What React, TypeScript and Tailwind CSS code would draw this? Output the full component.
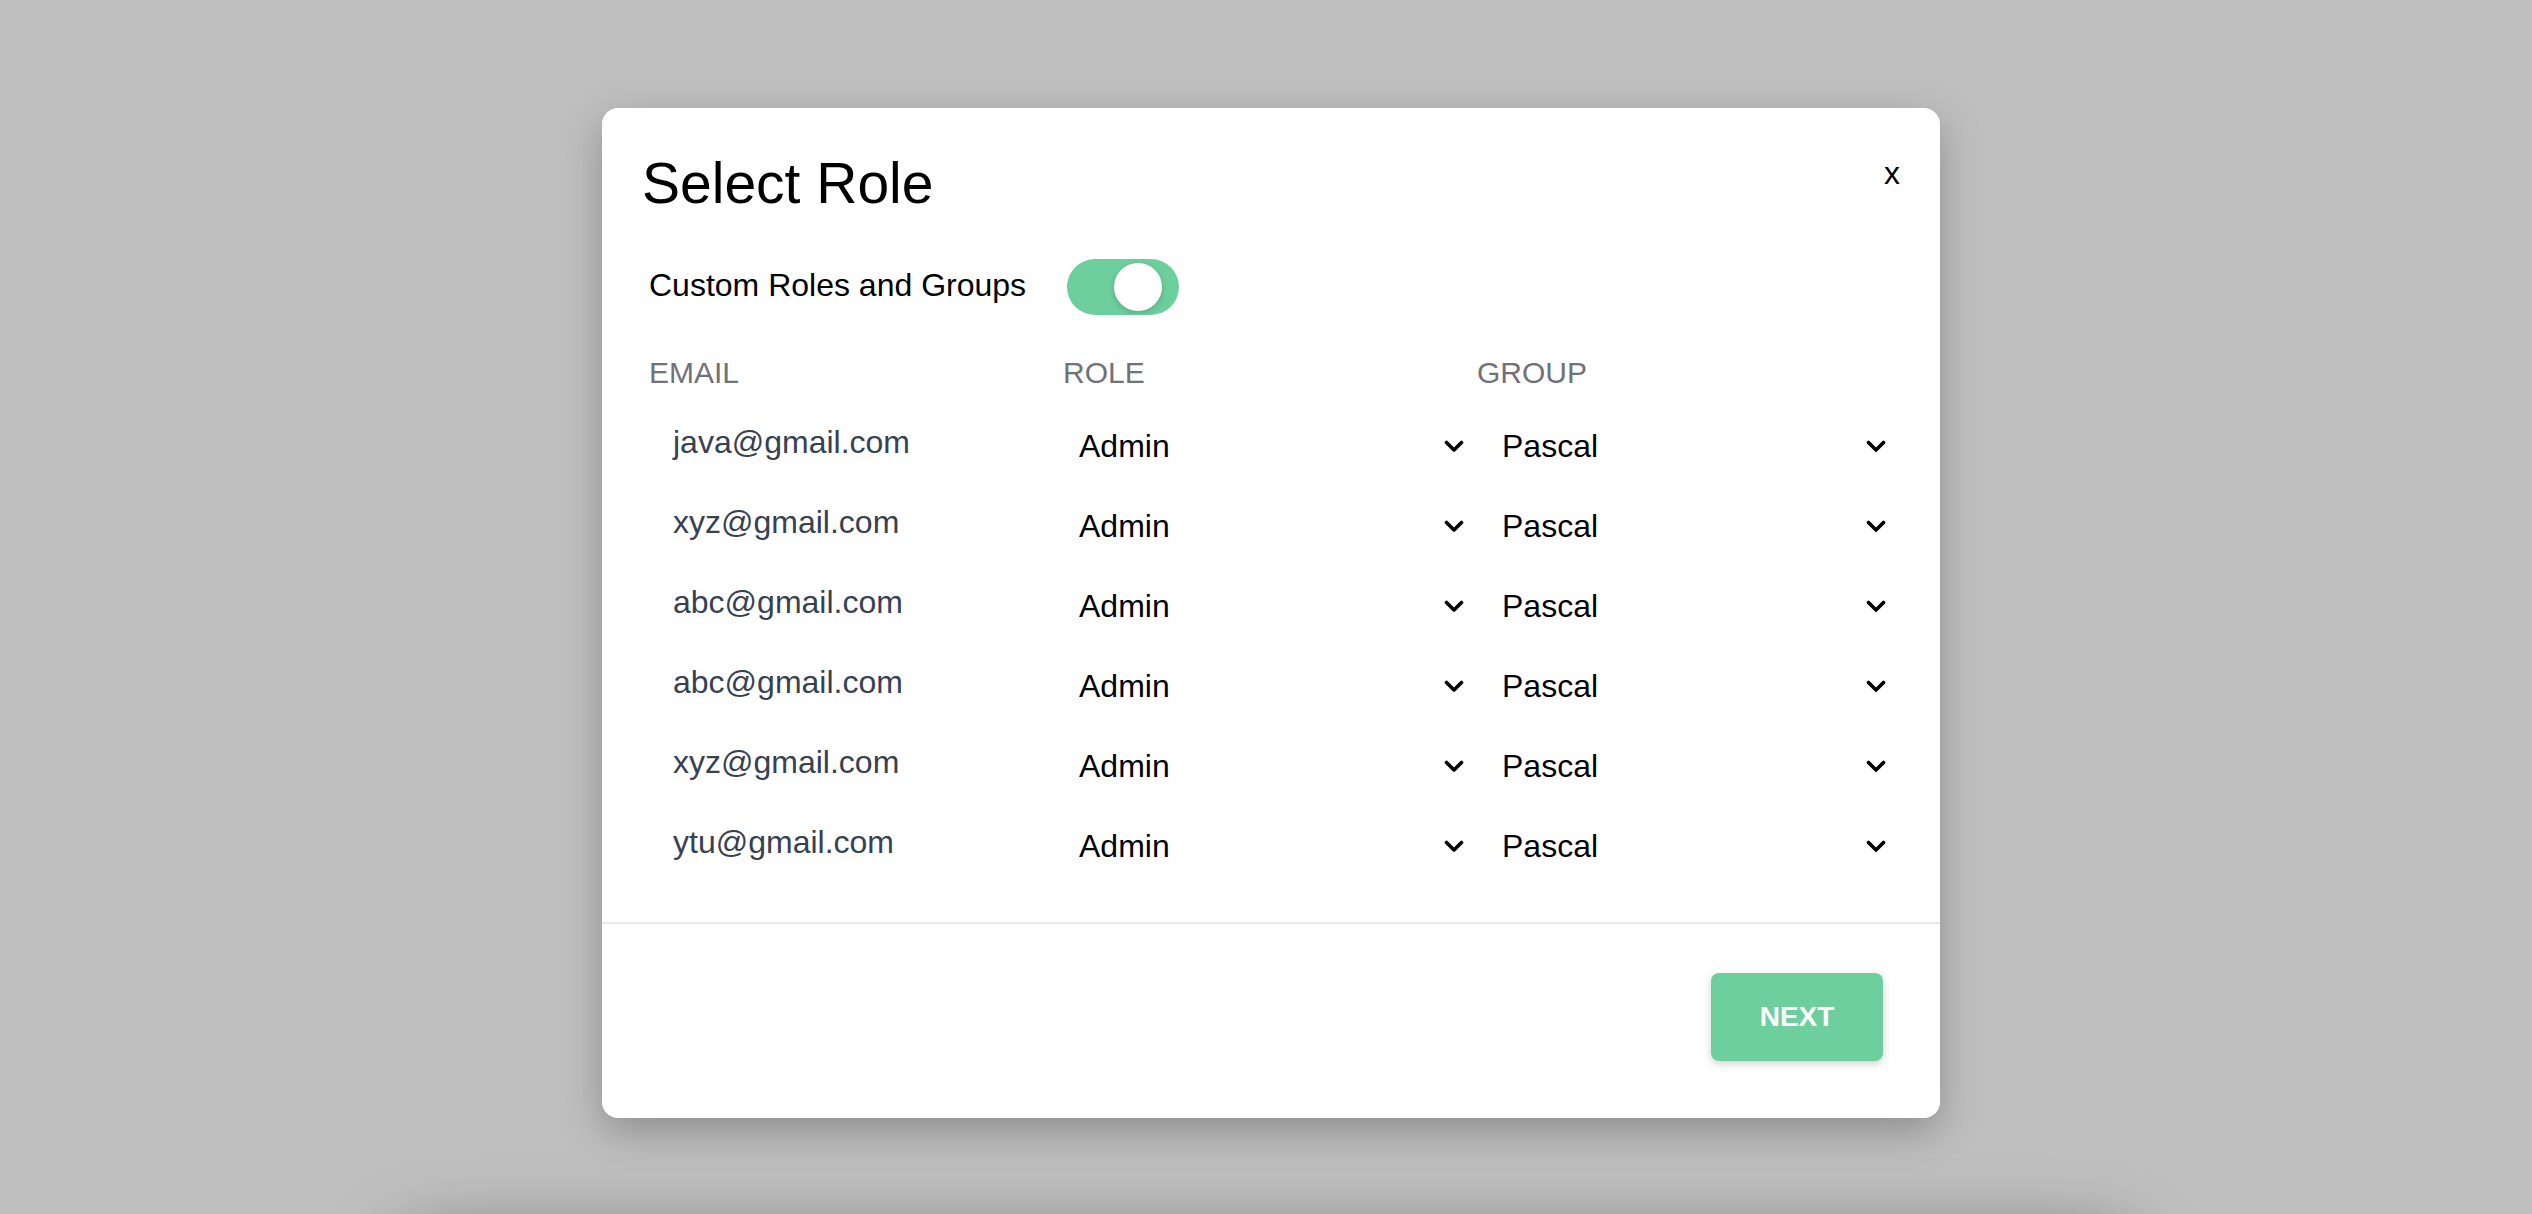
import { useState } from 'react';

const ROWS = [
  'java@gmail.com',
  'xyz@gmail.com',
  'abc@gmail.com',
  'abc@gmail.com',
  'xyz@gmail.com',
  'ytu@gmail.com',
];

function Chevron() {
  return (
    <svg width="20" height="13" viewBox="0 0 20 13" fill="none">
      <polyline
        points="2.5,2.5 10,10 17.5,2.5"
        stroke="#000"
        strokeWidth="3.6"
        strokeLinecap="round"
        strokeLinejoin="round"
      />
    </svg>
  );
}

export default function App() {
  const [custom, setCustom] = useState(true);

  return (
    <div className="relative h-screen w-full overflow-hidden bg-white font-['Liberation_Sans',Arial,sans-serif]">
      {/* page underneath the overlay, just below the fold */}
      <div className="h-[1236px]" />
      <div className="mx-[388px] h-[300px] rounded-[48px] bg-white shadow-[0_0_70px_rgba(0,0,0,0.4)]" />

      {/* overlay */}
      <div className="absolute inset-0 flex bg-black/25 pt-[108px] pl-[602px]">
        <div className="flex h-[1010px] w-[1338px] flex-col rounded-2xl bg-white shadow-[0_14px_40px_rgba(0,0,0,0.25)]">
          {/* Header */}
          <div className="flex items-start justify-between px-10 pt-[47px]">
            <h1 className="text-[57px] leading-none font-normal text-black">Select Role</h1>
            <button className="mt-[2px] text-[32px] leading-none text-black">x</button>
          </div>

          {/* Toggle row */}
          <div className="mt-[47px] flex h-[56px] items-center pl-[47px]">
            <span className="mb-1 text-[32px] leading-none text-black">Custom Roles and Groups</span>
            <button
              onClick={() => setCustom(!custom)}
              className="ml-[41px] flex h-[56px] w-[112px] items-center rounded-full bg-[#6dcf9e] pl-[47px]"
            >
              <span className="h-12 w-12 rounded-full bg-white shadow-[0_2px_6px_rgba(0,0,0,0.18)]" />
            </button>
          </div>

          {/* Column headers */}
          <div className="mt-[43px] flex pl-[47px] text-[30px] leading-none text-[#71717a]">
            <div className="w-[414px]">EMAIL</div>
            <div className="w-[414px]">ROLE</div>
            <div className="w-[414px]">GROUP</div>
          </div>

          {/* Rows */}
          <div className="mt-[18px] flex flex-col pl-[47px]">
            {ROWS.map((email, i) => (
              <div key={i} className="flex h-[80px] items-center">
                <div className="w-[414px] pb-2 pl-6 text-[32px] leading-none text-[#374151]">{email}</div>
                <div className="flex w-[414px] items-center justify-between pl-4 pr-[13px] text-[32px] leading-none text-black">
                  <span>Admin</span>
                  <Chevron />
                </div>
                <div className="flex w-[414px] items-center justify-between pl-[25px] pr-[5px] text-[32px] leading-none text-black">
                  <span>Pascal</span>
                  <Chevron />
                </div>
              </div>
            ))}
          </div>

          {/* Divider */}
          <div className="mt-[36px] h-[2px] w-full bg-[#e6e6eb]" />

          {/* Footer */}
          <div className="flex justify-end pr-[57px] pt-[49px]">
            <button className="h-[88px] w-[172px] rounded-lg bg-[#6dcf9e] text-[28px] font-bold text-white shadow-[0_3px_8px_rgba(0,0,0,0.18)]">
              NEXT
            </button>
          </div>
        </div>
      </div>
    </div>
  );
}
